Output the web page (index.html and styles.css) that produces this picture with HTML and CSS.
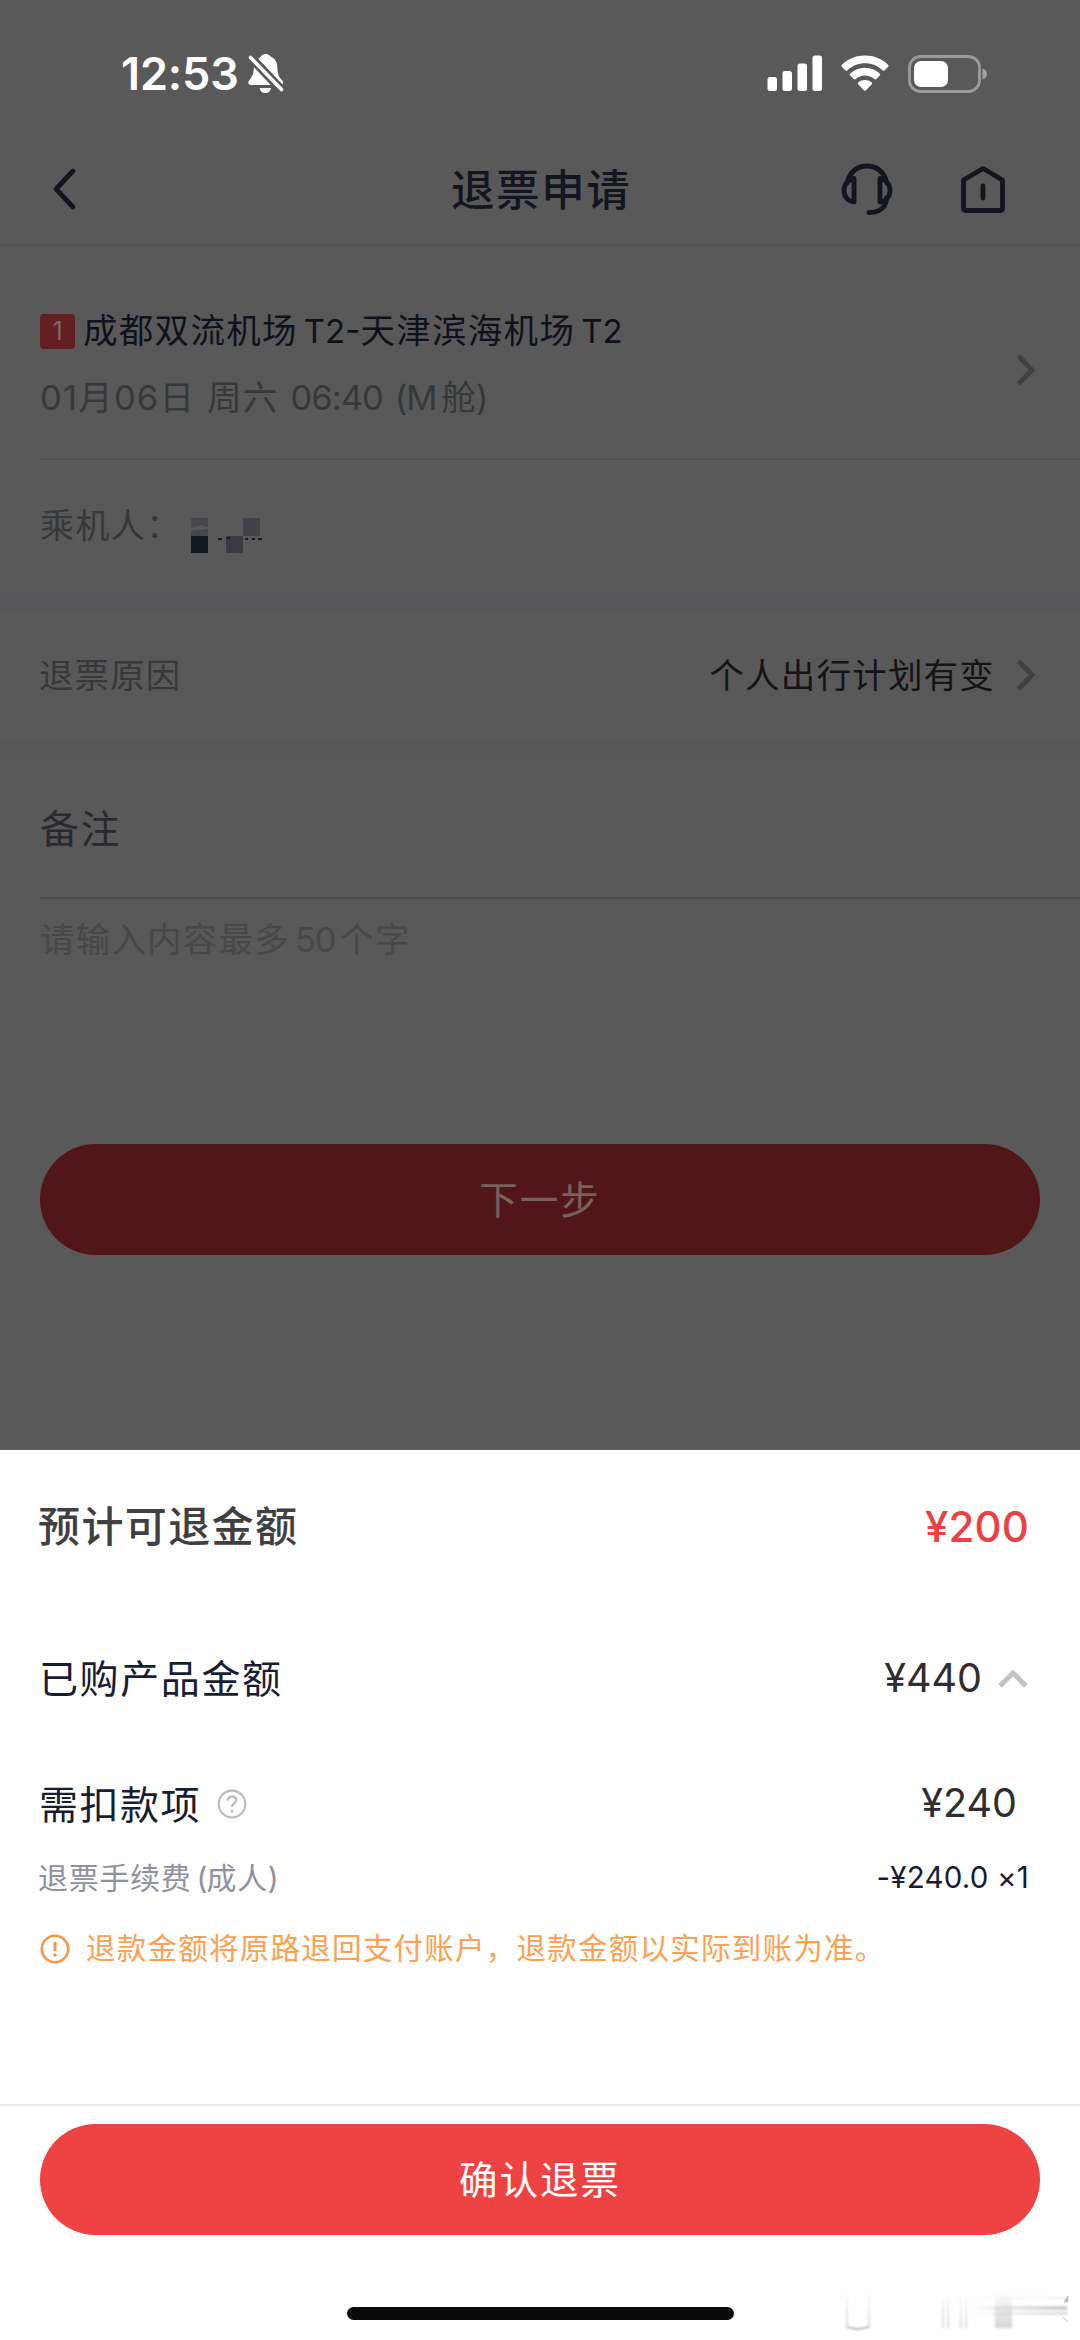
FILE: index.html
```html
<!DOCTYPE html>
<html lang="zh-CN">
<head>
<meta charset="utf-8">
<title>退票申请</title>
<link rel="stylesheet" href="styles.css">
</head>
<body>
<div class="screen">
  <main class="page">
    <div class="status">
      <span class="time">12:53</span>
      <svg class="bell" width="36" height="40" viewBox="0 0 36 40"><path d="M12 3.500c1.500-2.200 3-3.500 5.500-3.500s4 1 5 2.500c4 1.500 6.500 5 6.700 9.500.3 6 .8 9 3.300 12.500L35 27.500c.5 2-.5 3.500-2.500 3.500H3c-2.500 0-3.500-2.500-2-4.500 3-3.500 4.700-6 5-14.500C6.200 8.500 8 5 12 3.500zM11.500 34h11.500c-.5 3-2.500 5-5.700 5s-5.300-2-5.800-5z" fill="#fff"/><path d="M2.500 3l31 33" stroke="#595959" stroke-width="9"/><path d="M2.500 3.500l31 32" stroke="#fff" stroke-width="3.600" stroke-linecap="round"/></svg>
      <svg class="signal" width="56" height="37" viewBox="0 0 56 37" fill="#fff"><rect x="0.500" y="22" width="9.500" height="14" rx="2.500"/><rect x="15.500" y="16" width="9.500" height="20" rx="2.500"/><rect x="30.500" y="8.500" width="9.500" height="27.500" rx="2.500"/><rect x="45.500" y="0.500" width="9.500" height="35.500" rx="2.500"/></svg>
      <svg class="wifi" width="48" height="37" viewBox="0 0 48 37" fill="#fff"><path d="M24 .5c9 0 17 3.300 23 9.200.7.700.7 1.500 0 2.200l-3.300 3.300c-.7.700-1.500.7-2.200 0C36.800 10.700 30.700 8.200 24 8.200S11.200 10.700 6.500 15.200c-.7.700-1.500.7-2.200 0L1 11.900c-.7-.7-.7-1.500 0-2.200C7 3.800 15 .5 24 .5z"/><path d="M24 12.700c5.700 0 10.800 2.100 14.700 5.700.7.700.7 1.500 0 2.200l-3.300 3.400c-.7.700-1.500.6-2.200 0-2.500-2.300-5.700-3.600-9.200-3.600s-6.700 1.300-9.200 3.600c-.7.600-1.500.7-2.200 0l-3.300-3.400c-.7-.7-.7-1.500 0-2.200 3.900-3.600 9-5.700 14.700-5.700z"/><path d="M24 25c2.400 0 4.700.9 6.500 2.300.8.600.8 1.500.1 2.200l-5.500 5.700c-.7.800-1.500.8-2.200 0l-5.500-5.700c-.7-.7-.7-1.600.1-2.200C19.300 25.900 21.600 25 24 25z"/></svg>
      <svg class="battery" width="80" height="38" viewBox="0 0 80 38"><rect x="1.500" y="1.500" width="70" height="35" rx="11" fill="none" stroke="#9b9b9b" stroke-width="2.800"/><rect x="6" y="6" width="34" height="26" rx="7" fill="#fff"/><path d="M74.500 13.500c3 1 4.500 3 4.500 5.500s-1.500 4.500-4.500 5.500z" fill="#a3a3a3"/></svg>
    </div>

    <header class="nav">
      <svg class="back" width="26" height="44" viewBox="0 0 26 44"><path d="M22 4L5 22l17 18" fill="none" stroke="#14161f" stroke-width="4.800" stroke-linecap="round" stroke-linejoin="round"/></svg>
      <h1 class="nav-title">退票申请</h1>
      <svg class="service" width="52" height="52" viewBox="0 0 52 52" fill="none" stroke="#14161f" stroke-width="4.800" stroke-linecap="round" stroke-linejoin="round"><path d="M6 20C9 9 16 3 26 3s17 6 20 17"/><path d="M13 15.500v23.500C7 38.500 3 33.500 3 27.500S7 16 13 15.500z"/><path d="M39 15.500v23.500c6-.5 10-5.500 10-11.500S45 16 39 15.500z"/><path d="M45.500 35c0 8.500-6 14.500-17.500 14.500"/></svg>
      <svg class="home" width="48" height="48" viewBox="0 0 48 48" fill="none" stroke="#14161f" stroke-width="4.800" stroke-linejoin="round"><path d="M24 3.500L43.500 15v28q0 2.500-2.500 2.500H7q-2.500 0-2.500-2.500V15z"/><path d="M24 21v12" stroke-linecap="round"/></svg>
    </header>

    <section class="flight">
      <div class="flight-info">
        <div class="route"><span class="badge">1</span><span class="route-text">成都双流机场<span class="lat">T2-</span>天津滨海机场<span class="lat">T2</span></span></div>
        <div class="date"><span>01</span>月<span>06</span>日<span class="gap"></span>周六<span class="gap"></span><span class="num">06:40</span><span class="gap"></span><span class="num">(M</span><span class="cabin">舱</span>)</div>
      </div>
      <svg class="chev" width="20" height="34" viewBox="0 0 20 34"><path d="M2.500 3L16 17 2.500 31" fill="none" stroke="#404040" stroke-width="4.800"/></svg>
    </section>
    <section class="passenger">
      <span>乘机人：</span>
      <svg class="mosaic" width="80" height="36" viewBox="0 0 80 36"><path d="M0 0h17v18H0z" fill="#46474b"/><path d="M0 10l10-3 7 2v2l-17 2z" fill="#57575a"/><path d="M0 18h17v17H0z" fill="#101820"/><path d="M35 0h17v18H35z" fill="#5b5859"/><path d="M35 18h17v17H35z" fill="#3a3b41"/><path d="M52 0h17v18H52z" fill="#424348"/><path d="M27 21h4M36 20h3M54 21h3M61 21h3M67 21h4" stroke="#17191f" stroke-width="2"/></svg>
    </section>

    <section class="reason">
      <span class="reason-label">退票原因</span>
      <span class="reason-value">个人出行计划有变</span>
      <svg class="chev chev-reason" width="20" height="34" viewBox="0 0 20 34"><path d="M2.500 3L16 17 2.500 31" fill="none" stroke="#404040" stroke-width="4.800"/></svg>
    </section>

    <section class="remark">
      <h2 class="remark-title">备注</h2>
      <p class="remark-hint">请输入内容最多<span class="fifty">50</span>个字</p>
    </section>
    <button class="btn next">下一步</button>
  </main>

  <section class="sheet">
    <div class="line total"><span>预计可退金额</span><span class="total-amount">¥200</span></div>
    <div class="line bought"><span>已购产品金额</span><span class="amount">¥440</span>
      <svg class="up" width="30" height="20" viewBox="0 0 30 20"><path d="M2 17L15 4l13 13" fill="none" stroke="#c2c2c2" stroke-width="5"/></svg></div>
    <div class="line deduct"><span>需扣款项</span>
      <svg class="help" width="30" height="30" viewBox="0 0 30 30"><circle cx="15" cy="15" r="13.300" fill="none" stroke="#bdbdbd" stroke-width="2.200"/><path d="M10.800 11.500c0-2.500 1.800-4 4.200-4s4.200 1.500 4.200 3.800c0 3.200-4.200 3-4.200 6.700" fill="none" stroke="#bdbdbd" stroke-width="2.400"/><circle cx="15" cy="22.300" r="1.500" fill="#bdbdbd"/></svg>
      <span class="amount">¥240</span></div>
    <div class="line fee"><span>退票手续费<span class="paren">(</span>成人)</span><span class="fee-amount">-¥240.0 ×1</span></div>
    <div class="line notice">
      <svg class="warn" width="30" height="30" viewBox="0 0 30 30"><circle cx="15" cy="15" r="13.200" fill="none" stroke="#f99445" stroke-width="2.600"/><path d="M15 8v9" stroke="#f99445" stroke-width="3"/><circle cx="15" cy="21" r="1.800" fill="#f99445"/></svg>
      <span>退款金额将原路退回支付账户，退款金额以实际到账为准。</span></div>
    <footer class="foot">
      <button class="btn confirm">确认退票</button>
      <div class="indicator"></div>
    </footer>
    <svg class="smudge" width="240" height="50" viewBox="0 0 240 50"><defs><linearGradient id="v" x1="0" y1="0" x2="0" y2="1"><stop offset="0" stop-color="#999" stop-opacity="0"/><stop offset="1" stop-color="#999" stop-opacity=".4"/></linearGradient><linearGradient id="h" x1="0" y1="0" x2="1" y2="0"><stop offset="0" stop-color="#888" stop-opacity="0"/><stop offset="1" stop-color="#888" stop-opacity=".45"/></linearGradient><filter id="soft"><feGaussianBlur stdDeviation="1"/></filter></defs><g filter="url(#soft)"><g fill="url(#v)"><rect x="6" y="2" width="2" height="36"/><rect x="28" y="2" width="2" height="36"/><rect x="102" y="4" width="2" height="34"/><rect x="107" y="4" width="2" height="34"/><rect x="120" y="4" width="2" height="34"/><rect x="125" y="4" width="2" height="34"/><rect x="155" y="2" width="17" height="36"/></g><path d="M8 37q10 4 20 0" fill="none" stroke="#aaa" stroke-width="1.500"/><g fill="url(#h)"><rect x="130" y="7" width="97" height="2" opacity=".3"/><rect x="130" y="16" width="97" height="4"/><rect x="130" y="22" width="97" height="3" opacity=".7"/></g></g><path d="M224 12l4-6v6zM223 27l5 5" fill="#bbb" stroke="#c4c4c4"/></svg>
  </section>
</div>
</body>
</html>
```

FILE: styles.css
```css
* { box-sizing: border-box; margin: 0; padding: 0; }
body { width: 1080px; font-family: Inter, "Noto Sans CJK SC", sans-serif; line-height: 1; }
.screen { width: 1080px; height: 2340px; overflow: hidden; background: #595959; }
svg { display: block; flex: none; }
span, h1, h2 { white-space: nowrap; }

.page { height: 1450px; }
.status { display: flex; height: 147px; padding: 0 92px 0 121px; align-items: center; color: #fff; }
.time { width: 127px; font-size: 45px; font-weight: 600; letter-spacing: -.1px; }
.signal { margin-left: auto; }
.wifi { margin-left: 18px; }
.battery { margin-left: 19px; }

.nav { display: flex; align-items: center; height: 99px; padding: 0 73px 13px 51px; border-bottom: 2px solid #545455; }
.nav-title { margin-left: 374px; padding-top: 3px; font-size: 43.5px; font-weight: 500; letter-spacing: 1.6px; color: #14161f; }
.service { margin-left: auto; }
.home { margin-left: 66px; }

.flight { display: flex; align-items: center; height: 214px; margin-left: 40px; padding: 34px 44px 0 0; border-bottom: 2px solid #525253; }
.flight-info { flex: 1; margin-top: -9px; }
.flight .chev { margin-top: 1px; }
.route { display: flex; align-items: center; height: 66px; }
.badge { width: 35px; height: 35px; border-radius: 4px; background: #641f23; color: #7d6666; font-size: 25px; line-height: 35px; text-align: center; }
.route-text { margin-left: 8px; font-size: 34.5px; letter-spacing: 1.3px; color: #10121a; }
.route-text .lat { margin-left: 6px; font-size: 33px; letter-spacing: 0; }
.date { height: 66px; line-height: 66px; font-size: 34.5px; letter-spacing: 1.2px; color: #373839; }
.date .num { letter-spacing: -1px; }
.gap { display: inline-block; width: 12px; }
.cabin { margin-left: 5px; letter-spacing: 0; }
.passenger { display: flex; align-items: center; height: 132px; padding-left: 40px; font-size: 34px; letter-spacing: 1.4px; color: #373839; }
.mosaic { margin: 19px 0 0 9px; }

.reason { display: flex; align-items: center; height: 167px; padding: 0 44px 0 39px; border-top: 20px solid #575759; border-bottom: 18px solid #575759; font-size: 34.5px; }
.reason-label { letter-spacing: 1.1px; color: #373839; }
.reason-value { margin: 0 21px 0 auto; letter-spacing: 1.2px; color: #141416; }
.chev-reason { margin-bottom: 3px; }

.remark { height: 385px; margin-left: 40px; }
.remark-title { height: 140px; border-bottom: 2px solid #4f4f50; line-height: 139px; font-size: 39px; font-weight: 400; letter-spacing: 1.5px; color: #292a2d; }
.remark-hint { margin-top: 17px; line-height: 48px; font-size: 34.5px; letter-spacing: 1.2px; color: #484848; }
.fifty { margin: 0 4px 0 5px; letter-spacing: -1.2px; }
.btn { display: block; width: 1000px; height: 111px; margin: 0 auto; border: 0; border-radius: 56px; font: 400 38.5px/110px Inter, "Noto Sans CJK SC", sans-serif; letter-spacing: 2px; text-align: center; }
.next { background: #521619; color: #77605e; }

.sheet { position: relative; height: 890px; background: #fff; }
.line { display: flex; align-items: center; }
.total { height: 152px; padding: 2px 51px 0 38px; font-size: 42px; font-weight: 500; letter-spacing: 1.4px; color: #404040; }
.total-amount { margin-left: auto; letter-spacing: .1px; color: #e94144; }
.bought { height: 152px; padding: 1px 52px 0 39px; font-size: 39px; letter-spacing: 1.6px; color: #171d33; }
.amount { margin-left: auto; font-size: 39.5px; letter-spacing: 0; color: #2e2e30; }
.up { margin-left: 16px; }
.deduct { height: 99px; padding: 1px 63px 0 39px; font-size: 39px; letter-spacing: 1.5px; color: #171d33; }
.help { margin-left: 16px; }
.fee { height: 50px; padding: 0 51px 0 38px; font-size: 30px; letter-spacing: .7px; color: #8f929c; }
.paren { margin-left: 5px; letter-spacing: -1px; }
.fee-amount { margin-left: auto; font-size: 29.5px; letter-spacing: .2px; color: #171d33; }
.notice { height: 92px; padding-left: 40px; font-size: 29.5px; letter-spacing: 1.25px; color: #fda04f; }
.notice span { margin-left: 16px; }
.foot { height: 236px; margin-top: 109px; padding-top: 18px; border-top: 2px solid #e8e8e8; }
.confirm { background: #ef4343; color: #fff; }
.indicator { width: 387px; height: 13px; margin: 72px auto 0; border-radius: 7px; background: #0a0a0a; }
.smudge { position: absolute; right: 0; bottom: 0; }
```
